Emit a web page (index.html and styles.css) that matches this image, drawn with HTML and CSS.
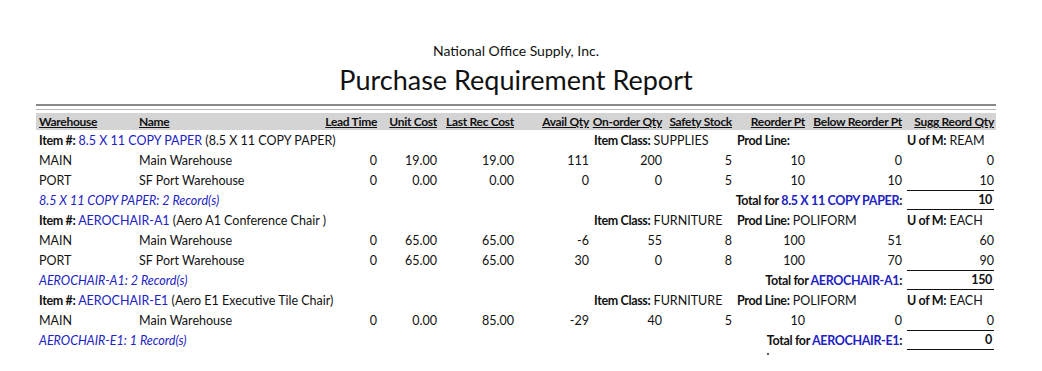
FILE: index.html
```html
<!DOCTYPE html>
<html>
<head>
<meta charset="utf-8">
<link rel="stylesheet" href="styles.css">
</head>
<body>
<div class="page">
  <div class="company">National Office Supply, Inc.</div>
  <div class="title">Purchase Requirement Report</div>
  <div class="rule-dark"></div>
  <div class="rule-light"></div>
  <table class="report">
    <colgroup>
      <col class="c1"><col class="c2"><col class="c3"><col class="c4"><col class="c5"><col class="c6"><col class="c7"><col class="c8"><col class="c9"><col class="c10"><col class="c11">
    </colgroup>
    <thead>
      <tr class="head">
        <th class="l">Warehouse</th>
        <th class="l">Name</th>
        <th>Lead Time</th>
        <th>Unit Cost</th>
        <th>Last Rec Cost</th>
        <th>Avail Qty</th>
        <th>On-order Qty</th>
        <th>Safety Stock</th>
        <th>Reorder Pt</th>
        <th>Below Reorder Pt</th>
        <th>Sugg Reord Qty</th>
      </tr>
    </thead>
    <tbody>
      <tr class="item first">
        <td colspan="6" class="l"><b>Item #:</b> <span class="link">8.5 X 11 COPY PAPER</span> (8.5 X 11 COPY PAPER)</td>
        <td colspan="2" class="meta"><b>Item Class:</b> SUPPLIES</td>
        <td colspan="2" class="meta"><b>Prod Line:</b></td>
        <td class="meta"><b>U of M:</b> REAM</td>
      </tr>
      <tr>
        <td class="l">MAIN</td><td class="l">Main Warehouse</td><td>0</td><td>19.00</td><td>19.00</td><td>111</td><td>200</td><td>5</td><td>10</td><td>0</td><td>0</td>
      </tr>
      <tr>
        <td class="l">PORT</td><td class="l">SF Port Warehouse</td><td>0</td><td>0.00</td><td>0.00</td><td>0</td><td>0</td><td>5</td><td>10</td><td>10</td><td>10</td>
      </tr>
      <tr class="total">
        <td colspan="4" class="l count">8.5 X 11 COPY PAPER: 2 Record(s)</td>
        <td colspan="6" class="tlabel"><b>Total for <span class="link">8.5 X 11 COPY PAPER</span>:</b></td>
        <td class="tval"><div class="boxed"><b>10</b></div></td>
      </tr>
      <tr class="item">
        <td colspan="6" class="l"><b>Item #:</b> <span class="link">AEROCHAIR-A1</span> (Aero A1 Conference Chair )</td>
        <td colspan="2" class="meta"><b>Item Class:</b> FURNITURE</td>
        <td colspan="2" class="meta"><b>Prod Line:</b> POLIFORM</td>
        <td class="meta"><b>U of M:</b> EACH</td>
      </tr>
      <tr>
        <td class="l">MAIN</td><td class="l">Main Warehouse</td><td>0</td><td>65.00</td><td>65.00</td><td>-6</td><td>55</td><td>8</td><td>100</td><td>51</td><td>60</td>
      </tr>
      <tr>
        <td class="l">PORT</td><td class="l">SF Port Warehouse</td><td>0</td><td>65.00</td><td>65.00</td><td>30</td><td>0</td><td>8</td><td>100</td><td>70</td><td>90</td>
      </tr>
      <tr class="total">
        <td colspan="4" class="l count">AEROCHAIR-A1: 2 Record(s)</td>
        <td colspan="6" class="tlabel"><b>Total for <span class="link">AEROCHAIR-A1</span>:</b></td>
        <td class="tval"><div class="boxed"><b>150</b></div></td>
      </tr>
      <tr class="item">
        <td colspan="6" class="l"><b>Item #:</b> <span class="link">AEROCHAIR-E1</span> (Aero E1 Executive Tile Chair)</td>
        <td colspan="2" class="meta"><b>Item Class:</b> FURNITURE</td>
        <td colspan="2" class="meta"><b>Prod Line:</b> POLIFORM</td>
        <td class="meta"><b>U of M:</b> EACH</td>
      </tr>
      <tr>
        <td class="l">MAIN</td><td class="l">Main Warehouse</td><td>0</td><td>0.00</td><td>85.00</td><td>-29</td><td>40</td><td>5</td><td>10</td><td>0</td><td>0</td>
      </tr>
      <tr class="total">
        <td colspan="4" class="l count">AEROCHAIR-E1: 1 Record(s)</td>
        <td colspan="6" class="tlabel"><b>Total for <span class="link">AEROCHAIR-E1</span>:</b></td>
        <td class="tval"><div class="boxed"><b>0</b></div></td>
      </tr>
    </tbody>
  </table>
  <div class="dot"></div>
</div>
</body>
</html>
```
FILE: styles.css
```css
html, body {
  margin: 0;
  padding: 0;
  background: #fff;
}
body {
  font-family: Lato, "Liberation Sans", sans-serif;
  color: #111;
}
.page {
  width: 960px;
  margin-left: 36px;
  padding-top: 42px;
}
.company {
  text-align: center;
  font-size: 14px;
  line-height: 18px;
}
.title {
  text-align: center;
  font-size: 27px;
  line-height: 32px;
  margin-top: 4px;
}
.rule-dark {
  margin-top: 8px;
  height: 2px;
  background: #8a8a8a;
}
.rule-light {
  margin-top: 3px;
  height: 1px;
  background: #b4b4b4;
}
.report {
  margin-top: 3px;
  width: 960px;
  border-collapse: collapse;
  table-layout: fixed;
  font-size: 12.5px;
}
.report b {
  letter-spacing: -0.35px;
}
.head th {
  font-size: 12px;
  letter-spacing: -0.3px;
}
.c1 { width: 100px; }
.c2 { width: 164px; }
.c3 { width: 78px; }
.c4 { width: 60px; }
.c5 { width: 77px; }
.c6 { width: 75px; }
.c7 { width: 73px; }
.c8 { width: 70px; }
.c9 { width: 73px; }
.c10 { width: 97px; }
.c11 { width: 93px; }
.report th, .report td {
  padding: 0 1px 0 0;
  text-align: right;
  white-space: nowrap;
  font-weight: normal;
}
.report .l { text-align: left; padding-left: 3px; }
.head th {
  background: #d4d4d4;
  height: 17px;
  font-weight: bold;
  text-decoration: underline;
}
.head th:last-child { padding-right: 2px; }
.report td { height: 20px; }
.report tr td:last-child { padding-right: 2px; }
.item.first td { height: 20px; }
.item td.meta { text-align: left; padding-left: 4px; }
.link { color: #2121c4; }
.count { color: #2121c4; font-style: italic; }
.tlabel { padding-right: 1px; }
.report td.tval { padding: 0; }
.boxed {
  margin-left: 4px;
  border-top: 1px solid #111;
  border-bottom: 1px solid #111;
  height: 18px;
  line-height: 18px;
  padding-right: 2px;
}
.dot {
  width: 2px;
  height: 2px;
  background: #555;
  margin: 3px 0 0 731px;
}
```
